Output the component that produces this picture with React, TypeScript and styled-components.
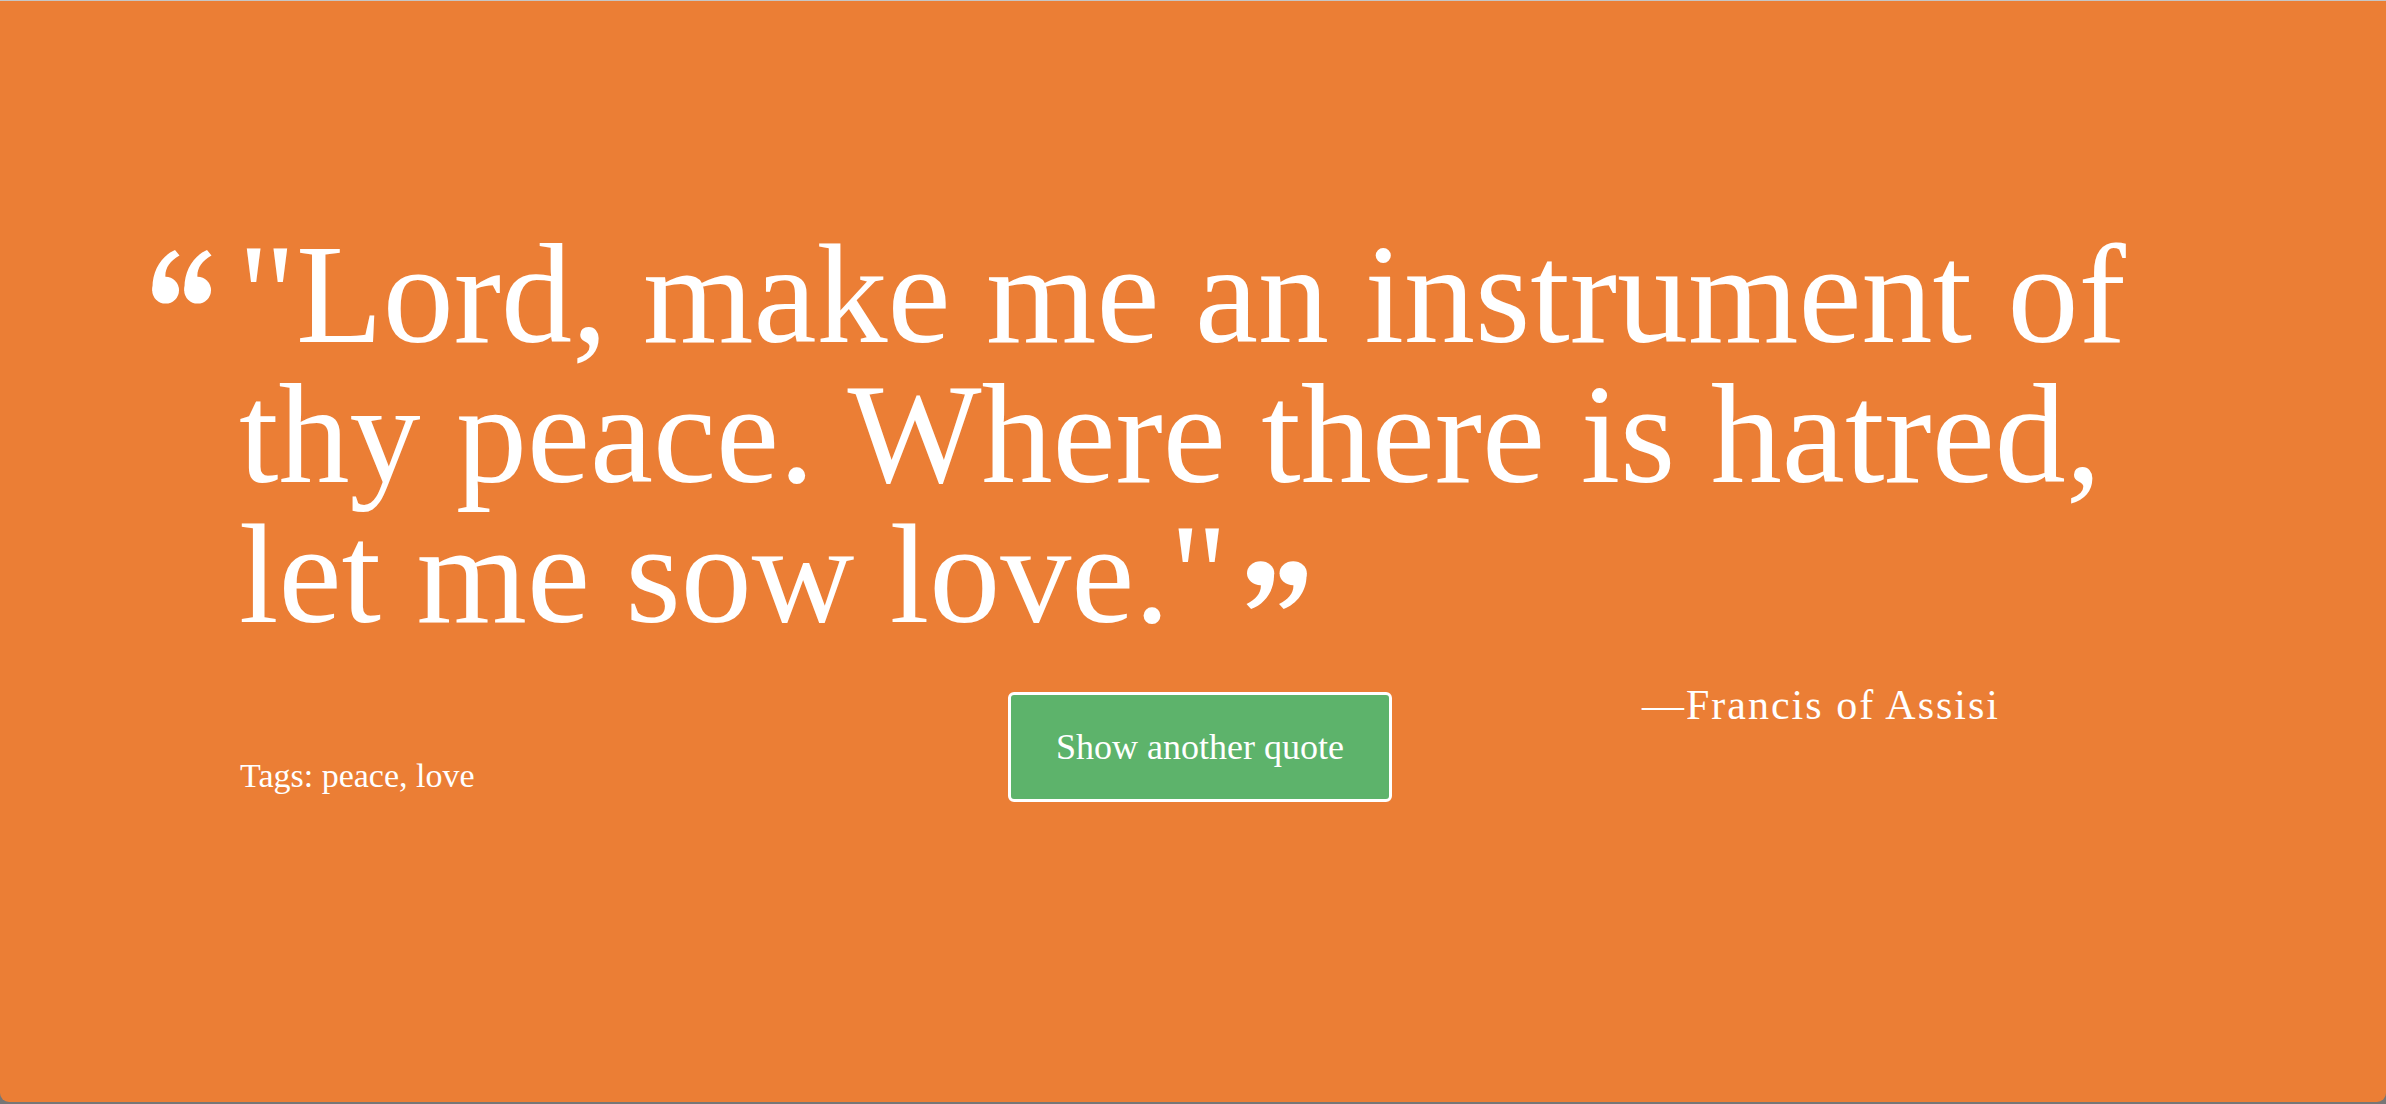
import React from "react";
import styled, { createGlobalStyle } from "styled-components";

const GlobalStyle = createGlobalStyle`
  html, body {
    margin: 0;
    padding: 0;
    background: #767676;
    overflow: hidden;
  }
  #root {
    width: 2386px;
    height: 1104px;
  }
`;

const Frame = styled.main`
  box-sizing: border-box;
  width: 2386px;
  height: 1102px;
  background: #eb7e35;
  border-top: 1px solid #c6c6c6;
  border-radius: 0 0 9px 9px;
  padding-top: 223px;
  display: flex;
  flex-direction: column;
  color: #ffffff;
  font-family: "Liberation Serif", "Times New Roman", serif;
`;

const Quote = styled.blockquote`
  margin: 0 0 0 239px;
  width: 1975px;
  font-size: 142px;
  line-height: 140px;
  font-weight: 400;
  text-indent: -87px;
`;

const QuoteMark = styled.svg<{ $lift: number; $gapLeft: number; $gapRight: number }>`
  display: inline-block;
  vertical-align: ${(p) => p.$lift}px;
  margin-left: ${(p) => p.$gapLeft}px;
  margin-right: ${(p) => p.$gapRight}px;
  fill: #ffffff;
`;

const Footer = styled.div`
  display: flex;
  align-items: flex-start;
  margin-top: 40px;
  padding-left: 240px;
`;

const Tags = styled.p`
  margin: 75px 0 0 0;
  width: 768px;
  font-size: 34px;
  line-height: 34px;
`;

const NextButton = styled.button`
  box-sizing: border-box;
  margin-top: 8px;
  width: 384px;
  height: 110px;
  border: 3px solid #ffffff;
  border-radius: 6px;
  background: #5db36b;
  color: #ffffff;
  font-family: "Liberation Serif", "Times New Roman", serif;
  font-size: 36px;
  cursor: pointer;
  padding: 0;
`;

const Author = styled.p`
  margin: 0;
  width: 608px;
  text-align: right;
  font-size: 42px;
  line-height: 42px;
  letter-spacing: 2px;
`;

const sixPath =
  "M0.6 41 C-0.8 22 9 6 23 0 L27.5 5.5 C17.5 11 12.5 19 13.5 28 Z";

const SixPair = () => (
  <>
    <g>
      <path d={sixPath} />
      <circle cx="13.6" cy="40.2" r="13.4" />
    </g>
    <g transform="translate(32 0)">
      <path d={sixPath} />
      <circle cx="13.6" cy="40.2" r="13.4" />
    </g>
  </>
);

const OpenQuote = () => (
  <QuoteMark $lift={38} $gapLeft={0} $gapRight={26} width="60" height="54" viewBox="0 0 60 54" aria-hidden="true">
    <SixPair />
  </QuoteMark>
);

const CloseQuote = () => (
  <QuoteMark $lift={13} $gapLeft={18} $gapRight={0} width="61" height="48" viewBox="0 0 60 54" preserveAspectRatio="none" aria-hidden="true">
    <g transform="rotate(180 30 27)">
      <SixPair />
    </g>
  </QuoteMark>
);

export default function App() {
  return (
    <>
      <GlobalStyle />
      <Frame>
        <Quote>
          <OpenQuote />
          "Lord, make me an instrument of thy peace. Where there is hatred, let me sow love."
          <CloseQuote />
        </Quote>
        <Footer>
          <Tags>Tags: peace, love</Tags>
          <NextButton type="button">Show another quote</NextButton>
          <Author>—Francis of Assisi</Author>
        </Footer>
      </Frame>
    </>
  );
}
